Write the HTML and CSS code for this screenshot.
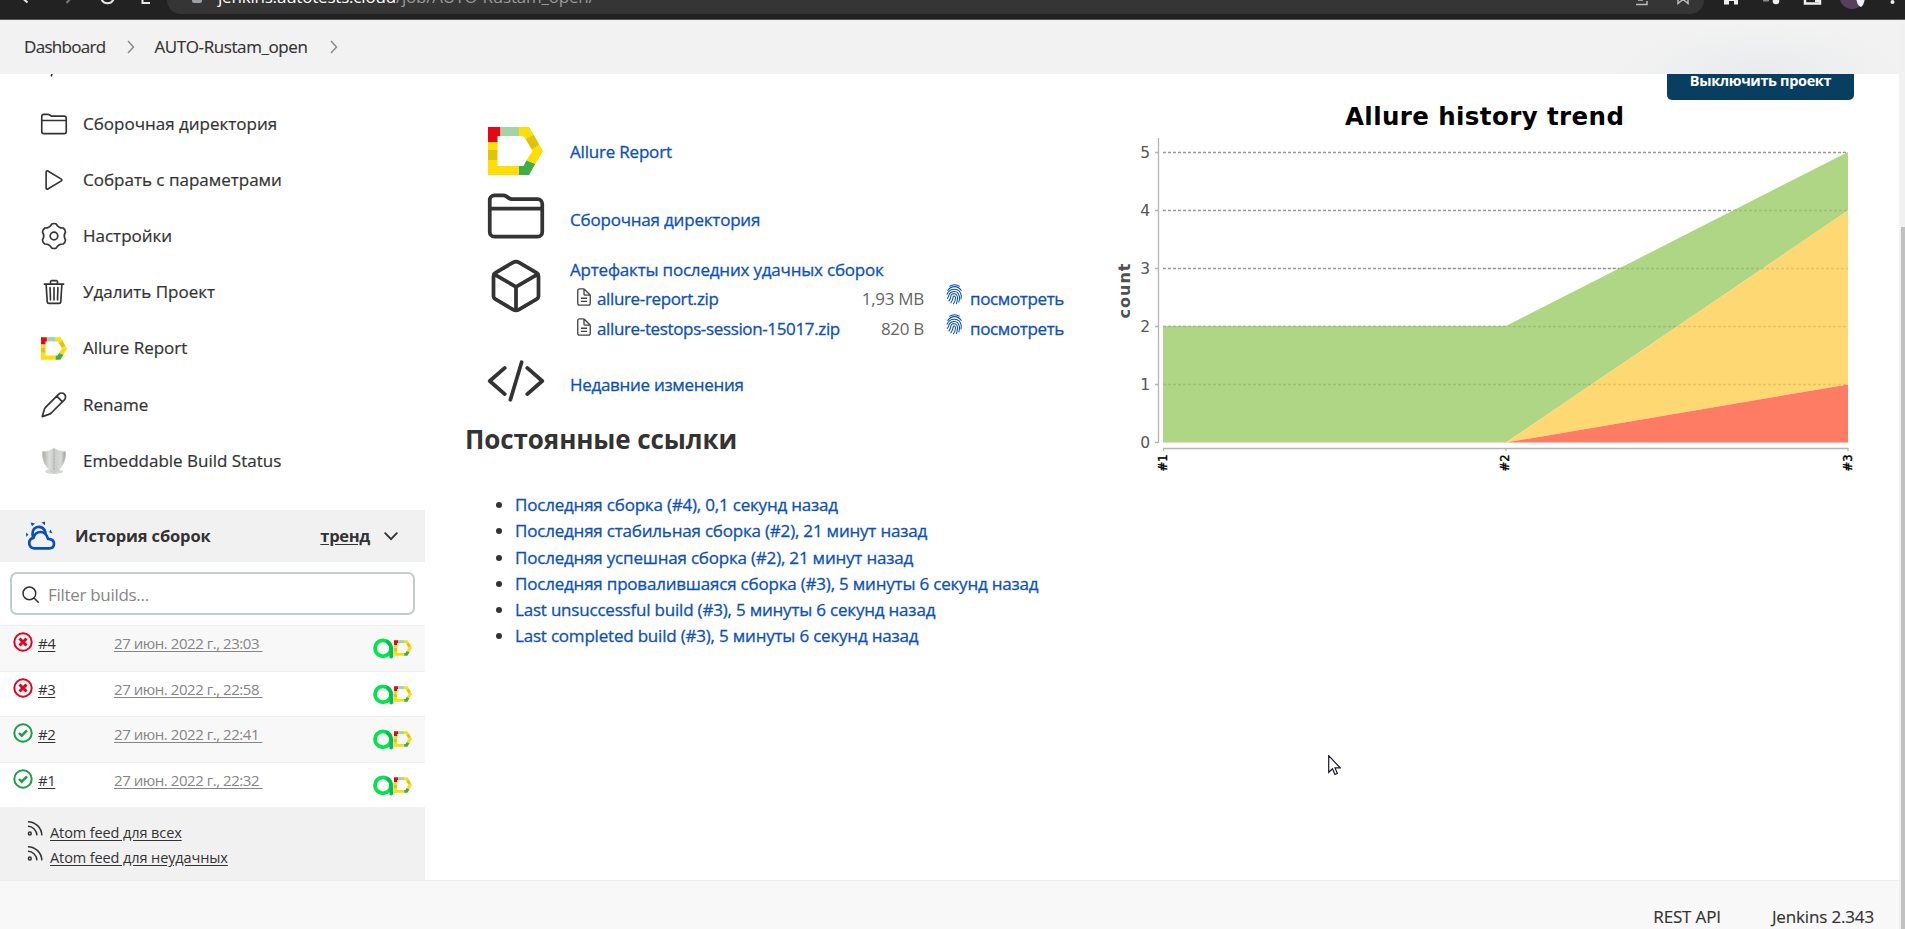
FILE: index.html
```html
<!DOCTYPE html>
<html lang="ru">
<head>
<meta charset="utf-8">
<title>AUTO-Rustam_open [Jenkins]</title>
<link rel="stylesheet" href="styles.css">
</head>
<body>
<svg class="defs" width="0" height="0" aria-hidden="true">
  <symbol id="folder" viewBox="0 0 512 512"><path d="M440 432H72a40 40 0 01-40-40V120a40 40 0 0140-40h75.89a40 40 0 0122.19 6.72l27.84 18.56a40 40 0 0022.19 6.72H440a40 40 0 0140 40v240a40 40 0 01-40 40zM32 192h448"/></symbol>
  <symbol id="code" viewBox="0 0 512 512"><path d="M160 368L32 256l128-112M352 368l128-112-128-112M304 96l-96 320"/></symbol>
  <symbol id="cube" viewBox="0 0 512 512"><path d="M448 341.37V170.61A32 32 0 00432.11 143l-152-88.46a47.94 47.94 0 00-48.24 0L79.89 143A32 32 0 0064 170.61v170.76A32 32 0 0079.89 369l152 88.46a48 48 0 0048.24 0l152-88.46A32 32 0 00448 341.37zM69 154l187 110 187-110M256 464V264"/></symbol>
  <symbol id="file" viewBox="0 0 512 512"><path d="M416 221.25V416a48 48 0 01-48 48H144a48 48 0 01-48-48V96a48 48 0 0148-48h98.75a32 32 0 0122.62 9.37l141.26 141.26a32 32 0 019.37 22.62zM256 56v120a32 32 0 0032 32h120M176 288h160M176 368h160"/></symbol>
  <symbol id="allure" viewBox="0 0 55 48">
    <path fill="#ffde05" d="M0 15h9.5v8H0zM0 33h9.5v6H31v9H0zM31 0h10l4.7 7.500-8.200 4.500L35 9h-4zM51.400 18 55 24l-7.700 13-8.900-3.500L44.500 24l-.8-2z"/>
    <path fill="#dfc40e" d="M0 23h9.500v10H0zM45.700 7.500 51.400 18l-7.700 4.500L37.500 12z"/>
    <path fill="#e60614" d="M0 0h12.500v9h-3v6H0z"/>
    <path fill="#a6d3a6" d="M12.500 0H31v9H12.500z"/>
    <path fill="#3fae49" d="M31 39h4.500l2.900-5.500 8.900 3.500L41 48H31z"/>
  </symbol>
  <symbol id="finger" viewBox="0 0 16 20">
    <path d="M3 2.300Q8-1 13 2.300M1.300 6.500Q4 2.500 8 2.500t6.700 4M.8 10Q2.500 5 8 5t6.500 6.500l-.4 3M1 14Q2.500 12 2.800 10 4.200 7.100 8 7.200t4.800 5.300q0 3-.8 5M2.500 16.500q2-2.500 2.300-6Q5.800 9 8 9.200t3 3.800q-.2 3.200-1.300 6M4.300 18.300Q6.600 15 6.800 12q1-1.500 2.200.8 0 3.500-2.200 6.500"/>
  </symbol>
  <symbol id="feed" viewBox="0 0 17 17"><path d="M1 1.200c8 0 14.500 6.500 14.800 14.600M1 6.200c5.200 0 9.300 4.200 9.600 9.600"/><circle cx="3" cy="13.800" r="1.500"/></symbol>
  <symbol id="fail" viewBox="0 0 20 20"><circle cx="10" cy="10" r="8.700"/><path stroke-width="3" stroke-linecap="butt" d="M6.500 6.500l7 7M13.500 6.500l-7 7"/></symbol>
  <symbol id="ok" viewBox="0 0 20 20"><circle cx="10" cy="10" r="8.700"/><path stroke-width="2.400" stroke-linecap="butt" d="M6 10l2.700 2.700L14 7.400"/></symbol>
  <symbol id="testops" viewBox="0 0 21 21"><circle cx="10" cy="10.300" r="8" fill="none" stroke="#00e64d" stroke-width="3.800"/><path d="M14.500 3.700q3.700 2.500 3.700 7v8" fill="none" stroke="#00c24a" stroke-width="3.600" stroke-linecap="round"/></symbol>
</svg>

<header class="browser">
  <div class="nav-icons">
    <svg width="150" height="14" viewBox="0 0 150 14"><g fill="none" stroke="#e8e8e8" stroke-width="2"><path d="M20-4l7.500 6.500"/><path stroke="#777" d="M72-3l-5.500 6"/><path d="M101-2q1.500 5.200 6.500 5.200T114-2"/><path d="M142.500-5v8h10v-8"/></g></svg>
  </div>
  <div class="omnibox">
    <span class="lock"></span>
    <span class="url"><b>jenkins.autotests.cloud</b>/job/AUTO-Rustam_open/</span>
    <svg class="omni-icons" width="60" height="14" viewBox="0 0 60 14" fill="none" stroke="#bbb" stroke-width="1.500"><path d="M-2-4v8.500h13V1M2 0h5"/><path d="M42-5v8.500l5-4 5 4V-5"/></svg>
  </div>
  <svg class="ext-icons" width="190" height="14" viewBox="0 0 190 14"><g fill="#eef0ef"><path d="M9-3h14v7.500h-4V1h-5v3.500H9z"/><circle cx="61" cy="1" r="3.300"/><path d="M48 0h6v1.500h-6z" fill="#888"/></g><path d="M90-4v7.500h15V-4" fill="none" stroke="#eef0ef" stroke-width="2.500"/><path d="M100-1h6v3h-6z" fill="#eef0ef"/><circle cx="137" cy="-3.500" r="12.500" fill="#57405b"/><path d="M141-2h9q-1 7-4 9-3-1-4-5z" fill="#f1f1fa"/><circle cx="177.500" cy="2" r="2" fill="#eee"/></svg>
</header>

<nav class="crumbs">
  <a>Dashboard</a><svg width="8" height="14" viewBox="0 0 8 14"><path d="M1 1l5.500 6L1 13"/></svg>
  <a class="crumb-job">AUTO-Rustam_open</a><svg width="8" height="14" viewBox="0 0 8 14"><path d="M1 1l5.500 6L1 13"/></svg>
</nav>

<div class="page">
  <aside class="side">
    <div class="tasks">
      <div class="task"><svg class="ti"><use href="#code"/></svg></div>
      <div class="task"><svg class="ti"><use href="#folder"/></svg><a>Сборочная директория</a></div>
      <div class="task"><svg class="ti" viewBox="0 0 512 512"><path d="M112 111v290c0 17.440 17 28.520 31 20.160l247.900-148.370c12.120-7.250 12.120-26.330 0-33.580L143 90.840c-14-8.360-31 2.720-31 20.160z"/></svg><a>Собрать с параметрами</a></div>
      <div class="task"><svg class="ti thin" viewBox="-14 -14 28 28"><path d="M-2.330-11.980Q0-13 2.330-11.980Q4.500-7.800 9.210-8Q11.260-6.500 11.540-3.970Q9 0 11.540 3.970Q11.260 6.500 9.210 8Q4.500 7.800 2.330 11.980Q0 13-2.330 11.980Q-4.500 7.800-9.210 8Q-11.260 6.500-11.540 3.970Q-9 0-11.540-3.970Q-11.260-6.500-9.210-8Q-4.500-7.800-2.330-11.980z"/><circle r="3.800"/></svg><a>Настройки</a></div>
      <div class="task"><svg class="ti" viewBox="0 0 512 512"><path d="M112 112l20 320c.95 18.490 14.400 32 32 32h184c17.670 0 30.870-13.510 32-32l20-320M80 112h352M192 112V72a23.930 23.930 0 0124-24h80a23.930 23.930 0 0124 24v40M256 176v224M184 176l8 224M328 176l-8 224"/></svg><a>Удалить Проект</a></div>
      <div class="task"><svg class="ti logo"><use href="#allure"/></svg><a>Allure Report</a></div>
      <div class="task"><svg class="ti thin" viewBox="0 0 28 28"><path d="M2.300 25.600L4.300 18.500Q4.600 17.300 5.500 16.400L18.700 3.200a3.900 3.900 0 015.700 5.600L11.200 22Q10 23 8.800 23.400zM16.800 5.200l5.600 5.600"/></svg><a>Rename</a></div>
      <div class="task"><svg class="ti fillicon" viewBox="0 0 28 28"><defs><linearGradient id="steel"><stop offset="0" stop-color="#a9aca8"/><stop offset=".3" stop-color="#dcdeda"/><stop offset=".5" stop-color="#c9cbc7"/><stop offset=".8" stop-color="#d8dad6"/><stop offset="1" stop-color="#999b98"/></linearGradient></defs><ellipse cx="14" cy="24.500" rx="9" ry="2.400" fill="#d6d6d6"/><path fill="url(#steel)" stroke="#c2c4c0" stroke-width=".6" d="M14 1.500Q19 5.500 25.500 4.500Q26.500 18.500 14 26Q1.500 18.500 2.500 4.500Q9 5.500 14 1.500z"/><path d="M14 3v21" stroke="#a5a7a4" stroke-dasharray="1 2" stroke-width="1"/></svg><a>Embeddable Build Status</a></div>
    </div>
    <section class="history">
      <header class="history-head">
        <svg class="weather" width="30" height="30" viewBox="0 0 30 30"><g fill="none" stroke="#0b50b8" stroke-width="2.700" stroke-linejoin="round"><path d="M7.500 27.300a5.300 5.300 0 010-10.400q1.500-5.900 7-5.900 5.600 0 7.500 6.800 6 .4 6 4.900 0 4.600-4.700 4.600z"/><path d="M7.200 17Q4.800 8.500 10.500 6.300q5.600-1.500 8.300 3.200 1 2.200.7 4"/></g><path fill="#0b50b8" d="M4.500 1.500l4.500 1-3 2.700zM15.500 1.500l3.500-1v3.700zM0 11.500l2.500 2.200-2.300 2zM24.500 8.500l2 4-3.500-1.300z"/></svg>
        <b>История сборок</b><b class="trend">тренд</b>
        <svg width="14" height="9" viewBox="0 0 14 9"><path d="M1.200 1.200L7 7.200l5.800-6" fill="none" stroke="#333" stroke-width="1.900" stroke-linecap="round"/></svg>
      </header>
      <div class="filter-wrap"><div class="filter"><svg width="19" height="19" viewBox="0 0 19 19"><circle cx="7.800" cy="7.800" r="6.700"/><path d="M12.700 12.700l5 5"/></svg><span>Filter builds...</span></div></div>
      <div class="build alt"><svg class="st bad"><use href="#fail"/></svg><a class="num">#4</a><a class="date">27 июн. 2022 г., 23:03&nbsp;</a><svg class="ops"><use href="#testops"/></svg><svg class="al"><use href="#allure"/></svg></div>
      <div class="build"><svg class="st bad"><use href="#fail"/></svg><a class="num">#3</a><a class="date">27 июн. 2022 г., 22:58&nbsp;</a><svg class="ops"><use href="#testops"/></svg><svg class="al"><use href="#allure"/></svg></div>
      <div class="build alt"><svg class="st good"><use href="#ok"/></svg><a class="num">#2</a><a class="date">27 июн. 2022 г., 22:41&nbsp;</a><svg class="ops"><use href="#testops"/></svg><svg class="al"><use href="#allure"/></svg></div>
      <div class="build"><svg class="st good"><use href="#ok"/></svg><a class="num">#1</a><a class="date">27 июн. 2022 г., 22:32&nbsp;</a><svg class="ops"><use href="#testops"/></svg><svg class="al"><use href="#allure"/></svg></div>
      <div class="feeds">
        <div class="feed"><svg><use href="#feed"/></svg><a>Atom feed для всех</a></div>
        <div class="feed"><svg><use href="#feed"/></svg><a>Atom feed для неудачных</a></div>
      </div>
    </section>
  </aside>

  <main class="main">
    <div class="summary">
      <div class="item r1"><svg class="big big-logo"><use href="#allure"/></svg><a>Allure Report</a></div>
      <div class="item r2"><svg class="big"><use href="#folder"/></svg><a>Сборочная директория</a></div>
      <div class="item r3"><svg class="big"><use href="#cube"/></svg>
        <div class="artifacts">
          <a>Артефакты последних удачных сборок</a>
          <div class="files">
            <svg class="fi"><use href="#file"/></svg><a>allure-report.zip</a><span>1,93 MB</span><svg class="fp"><use href="#finger"/></svg><a>посмотреть</a>
            <svg class="fi"><use href="#file"/></svg><a>allure-testops-session-15017.zip</a><span>820 B</span><svg class="fp"><use href="#finger"/></svg><a>посмотреть</a>
          </div>
        </div>
      </div>
      <div class="item r4"><svg class="big"><use href="#code"/></svg><a>Недавние изменения</a></div>
    </div>
    <h2>Постоянные ссылки</h2>
    <ul class="links">
      <li><a>Последняя сборка (#4), 0,1 секунд назад</a></li>
      <li><a>Последняя стабильная сборка (#2), 21 минут назад</a></li>
      <li><a>Последняя успешная сборка (#2), 21 минут назад</a></li>
      <li><a>Последняя провалившаяся сборка (#3), 5 минуты 6 секунд назад</a></li>
      <li><a>Last unsuccessful build (#3), 5 минуты 6 секунд назад</a></li>
      <li><a>Last completed build (#3), 5 минуты 6 секунд назад</a></li>
    </ul>
  </main>

  <div class="right">
    <div class="toolbar"><button class="disable">Выключить проект</button></div>
    <svg class="chart" width="799" height="390" viewBox="1100 100 799 390">
      <text class="c-title" x="1345" y="125" textLength="279">Allure history trend</text>
      <g class="grid"><path d="M1163 152.500h685M1163 210.500h685M1163 268.500h685M1163 326.500h685M1163 384.500h685"/></g>
      <path fill="#aed685" d="M1163 326h343l342-174v58.500L1506 442.500h-343z"/>
      <path fill="#fed872" d="M1506 442.500L1848 210.500v174z"/>
      <path fill="#fe7c64" d="M1506 442.500L1848 384.500v58z"/>
      <g class="grid over"><path d="M1163 326.500h685M1163 384.500h685M1391 268.500h457M1734 210.500h114"/></g>
      <path class="axis" d="M1158.500 138v305M1155 152.500h3M1155 210.500h3M1155 268.500h3M1155 326.500h3M1155 384.500h3M1155 442.500h3M1163 448.500h685.500M1163.500 448v3M1506 448v3M1848 448v3"/>
      <g class="c-tick" text-anchor="end"><text x="1150" y="158">5</text><text x="1150" y="215.500">4</text><text x="1150" y="274">3</text><text x="1150" y="332">2</text><text x="1150" y="390">1</text><text x="1150" y="448">0</text></g>
      <text class="c-label" transform="translate(1130 318.500) rotate(-90)" textLength="55">count</text>
      <g class="c-cat"><text transform="translate(1166.500 471.500) rotate(-90)" textLength="17">#1</text><text transform="translate(1509 471.500) rotate(-90)" textLength="17">#2</text><text transform="translate(1851.500 471.500) rotate(-90)" textLength="17">#3</text></g>
    </svg>
  </div>
</div>

<footer class="footer"><a>REST API</a><a>Jenkins 2.343</a></footer>
<div class="scrollbar"><div class="thumb"></div></div>
<svg class="cursor" width="13" height="21" viewBox="0 0 13 21"><path d="M.7.700v16.600l3.800-3.500 2.400 5.700 2.500-1-2.400-5.600h5.200z" fill="#fff" stroke="#1a1a2a" stroke-width="1.200"/></svg>
</body>
</html>
```
FILE: styles.css
```css
* { box-sizing: border-box; }
body {
  margin: 0;
  width: 1905px;
  height: 929px;
  overflow: hidden;
  position: relative;
  background: #fff;
  color: #333;
  font: 500 17px/26px "Open Sans", "Noto Sans", sans-serif;
  letter-spacing: -0.3px;
}
svg { display: block; flex: none; }
.defs { position: absolute; }

.browser {
  height: 20px;
  display: flex;
  align-items: flex-start;
  background: #222;
  border-bottom: 1px solid #5b565b;
  overflow: hidden;
}
.nav-icons { width: 167px; }
.omnibox {
  width: 1537px;
  height: 14px;
  display: flex;
  background: #353535;
  border-radius: 0 0 16px 16px;
  overflow: hidden;
}
.lock { width: 10px; height: 3px; margin: 0 16px 0 25px; background: #9aa0a6; border-radius: 0 0 2px 2px; }
.url { flex: 1; color: #999; font-weight: 400; line-height: 22px; margin-top: -14px; letter-spacing: -0.2px; }
.url b { color: #fff; font-weight: 400; }
.omni-icons { margin-right: 8px; }
.ext-icons { margin-left: 11px; }

.crumbs {
  height: 54px;
  padding: 0 0 0 24px;
  display: flex;
  align-items: center;
  letter-spacing: -0.4px;
  -webkit-text-stroke: 0.15px;
  background: radial-gradient(ellipse 145px 52px at 1760px 54px, #e9ebed, #f2f2f2 100%) #f2f2f2;
}
.crumbs a:first-child { letter-spacing: -0.7px; }
.crumbs svg { margin: 0 19px 0 22px; fill: none; stroke: #8a8a8a; stroke-width: 1.5; }

.page { display: flex; height: 806px; overflow: hidden; }
.side { width: 425px; flex: none; }
.tasks { height: 436px; overflow: hidden; letter-spacing: 0; -webkit-text-stroke: 0.2px; }
.task { height: 56.2px; display: flex; align-items: center; padding-left: 40px; gap: 15px; }
.task:first-child { height: 21.5px; align-items: flex-end; }
.task:first-child .ti { margin-bottom: 14.500px; }
.ti { width: 28px; height: 28px; fill: none; stroke: #333; stroke-width: 30px; stroke-linecap: round; stroke-linejoin: round; }
.ti.thin { stroke-width: 1.7px; }
.ti.fillicon, .ti.logo { stroke: none; }
.ti.logo { width: 26px; height: 23px; margin: 1px 1px 0 1px; }

.history-head { height: 52px; background: #f1f1f1; display: flex; align-items: center; padding-left: 26px; }
.history-head b { font-weight: 700; font-size: 16.500px; margin-left: 19px; letter-spacing: -0.15px; }
.history-head .trend { margin: 0 14px 0 auto; text-decoration: underline; text-underline-offset: 2px; letter-spacing: -0.3px; }
.history-head svg:last-child { margin-right: 27px; }
.filter-wrap { height: 63px; padding: 10px; }
.filter { height: 43px; border: 2px solid #c1ccd0; border-radius: 7px; display: flex; align-items: center; gap: 8px; padding: 2px 0 0 10px; color: #858585; font-weight: 400; }
.filter svg { fill: none; stroke: #333; stroke-width: 1.6; width: 18px; height: 18px; }

.build { height: 45.5px; border-top: 1px solid #efefef; display: flex; align-items: flex-start; padding: 6px 13px 0 13px; font-size: 15px; font-weight: 400; line-height: 22px; letter-spacing: -0.45px; }
.build.alt { background: #f8f8f8; }
.st { width: 20px; height: 20px; fill: none; stroke-width: 2px; }
.bad { stroke: #e6001f; }
.good { stroke: #1e9a4a; }
.num, .date, .feed a { text-decoration: underline; text-underline-offset: 2px; }
.num { width: 76px; margin-left: 5px; }
.date { color: #858585; flex: 1; }
.ops { width: 21px; height: 21px; margin-top: 6px; }
.al { width: 18px; height: 16px; margin-top: 8px; }

.feeds { height: 73px; background: #f1f1f1; padding: 13px 0 0 27px; font-size: 14.500px; letter-spacing: -0.1px; }
.feed { height: 25px; display: flex; gap: 7px; align-items: flex-start; }
.feed svg { width: 16px; height: 17px; fill: none; stroke: #333; stroke-width: 1.6px; }

.main { width: 675px; flex: none; padding: 50px 0 0 41px; }
.main a { color: #0d50b8; letter-spacing: -0.2px; -webkit-text-stroke: 0.3px #0d50b8; }
.item { display: flex; padding-left: 20px; gap: 24px; }
.item > a { align-self: flex-start; }
.r1 { height: 62px; }
.r1 > a { margin-top: 15px; margin-left: 2px; }
.r2 { height: 70px; }
.r2 > a { margin-top: 21px; }
.r3 { height: 95px; }
.r4 { height: 69.500px; }
.r4 > a { margin-top: 21px; }
.main .r4 > a { letter-spacing: -0.3px; }
.big { width: 60px; height: 60px; fill: none; stroke: #333; stroke-width: 32px; stroke-linecap: round; stroke-linejoin: round; }
.big-logo { stroke: none; width: 55px; height: 48px; margin: 3px 1px 0 2px; }
.artifacts { padding-top: 1px; }
.files { display: grid; grid-template-columns: 27px 258px 69px 46px auto; grid-auto-rows: 30px; }
.files span { text-align: right; color: #666; font-weight: 400; }
.files a, .files span { line-height: 32px; }
.main .files a { letter-spacing: -0.36px; }
.fi { width: 20px; height: 20px; margin: 4px 0 0 4px; fill: none; stroke: #444; stroke-width: 34px; stroke-linejoin: round; }
.fp { width: 17px; height: 21px; margin: 1px 0 0 22px; fill: none; stroke: #0d50b8; stroke-width: 1px; }
h2 { margin: 0 0 0 -1px; height: 71.700px; font-size: 26px; line-height: 36px; font-weight: 700; letter-spacing: -0.1px; }
.links { margin: 0; padding-left: 49px; }
.links li { height: 26.2px; }

.right { flex: 1; position: relative; }
.toolbar { height: 26px; display: flex; padding-left: 567px; }
.disable { width: 187px; height: 26px; border: 0; border-radius: 0 0 5px 5px; background: #083f61; color: #fff; font: 700 14.500px/14px "Open Sans", sans-serif; letter-spacing: -0.35px; padding: 0 0 13px; white-space: nowrap; }
.chart text { font-family: "DejaVu Sans", sans-serif; letter-spacing: 0; }
.c-title { font-size: 24.500px; font-weight: 700; fill: #000; }
.c-tick { font-size: 15.500px; fill: #555; font-weight: 400; }
.chart .c-label { font-size: 16px; font-weight: 700; fill: #505050; }
.c-cat { font-size: 11.500px; fill: #000; stroke: #000; stroke-width: 0.4px; font-weight: 400; }
.grid { fill: none; stroke: #999; stroke-width: 1.4; stroke-dasharray: 3 2; }
.grid.over { stroke: #000; opacity: .1; }
.axis { fill: none; stroke: #b5b5b5; stroke-width: 1.3; }

.footer { height: 49px; margin-right: 6px; border-top: 1px solid #eee; background: #f8f8f8; display: flex; justify-content: flex-end; gap: 51px; padding: 23px 25px 0 0; letter-spacing: -0.15px; -webkit-text-stroke: 0.15px; }
.scrollbar { position: absolute; top: 20px; right: 0; width: 6px; height: 909px; background: #f1f1f1; padding: 207px 0 0 2px; }
.thumb { height: 702px; background: #c1c1c1; }
.cursor { position: absolute; left: 1328px; top: 755px; }
```
